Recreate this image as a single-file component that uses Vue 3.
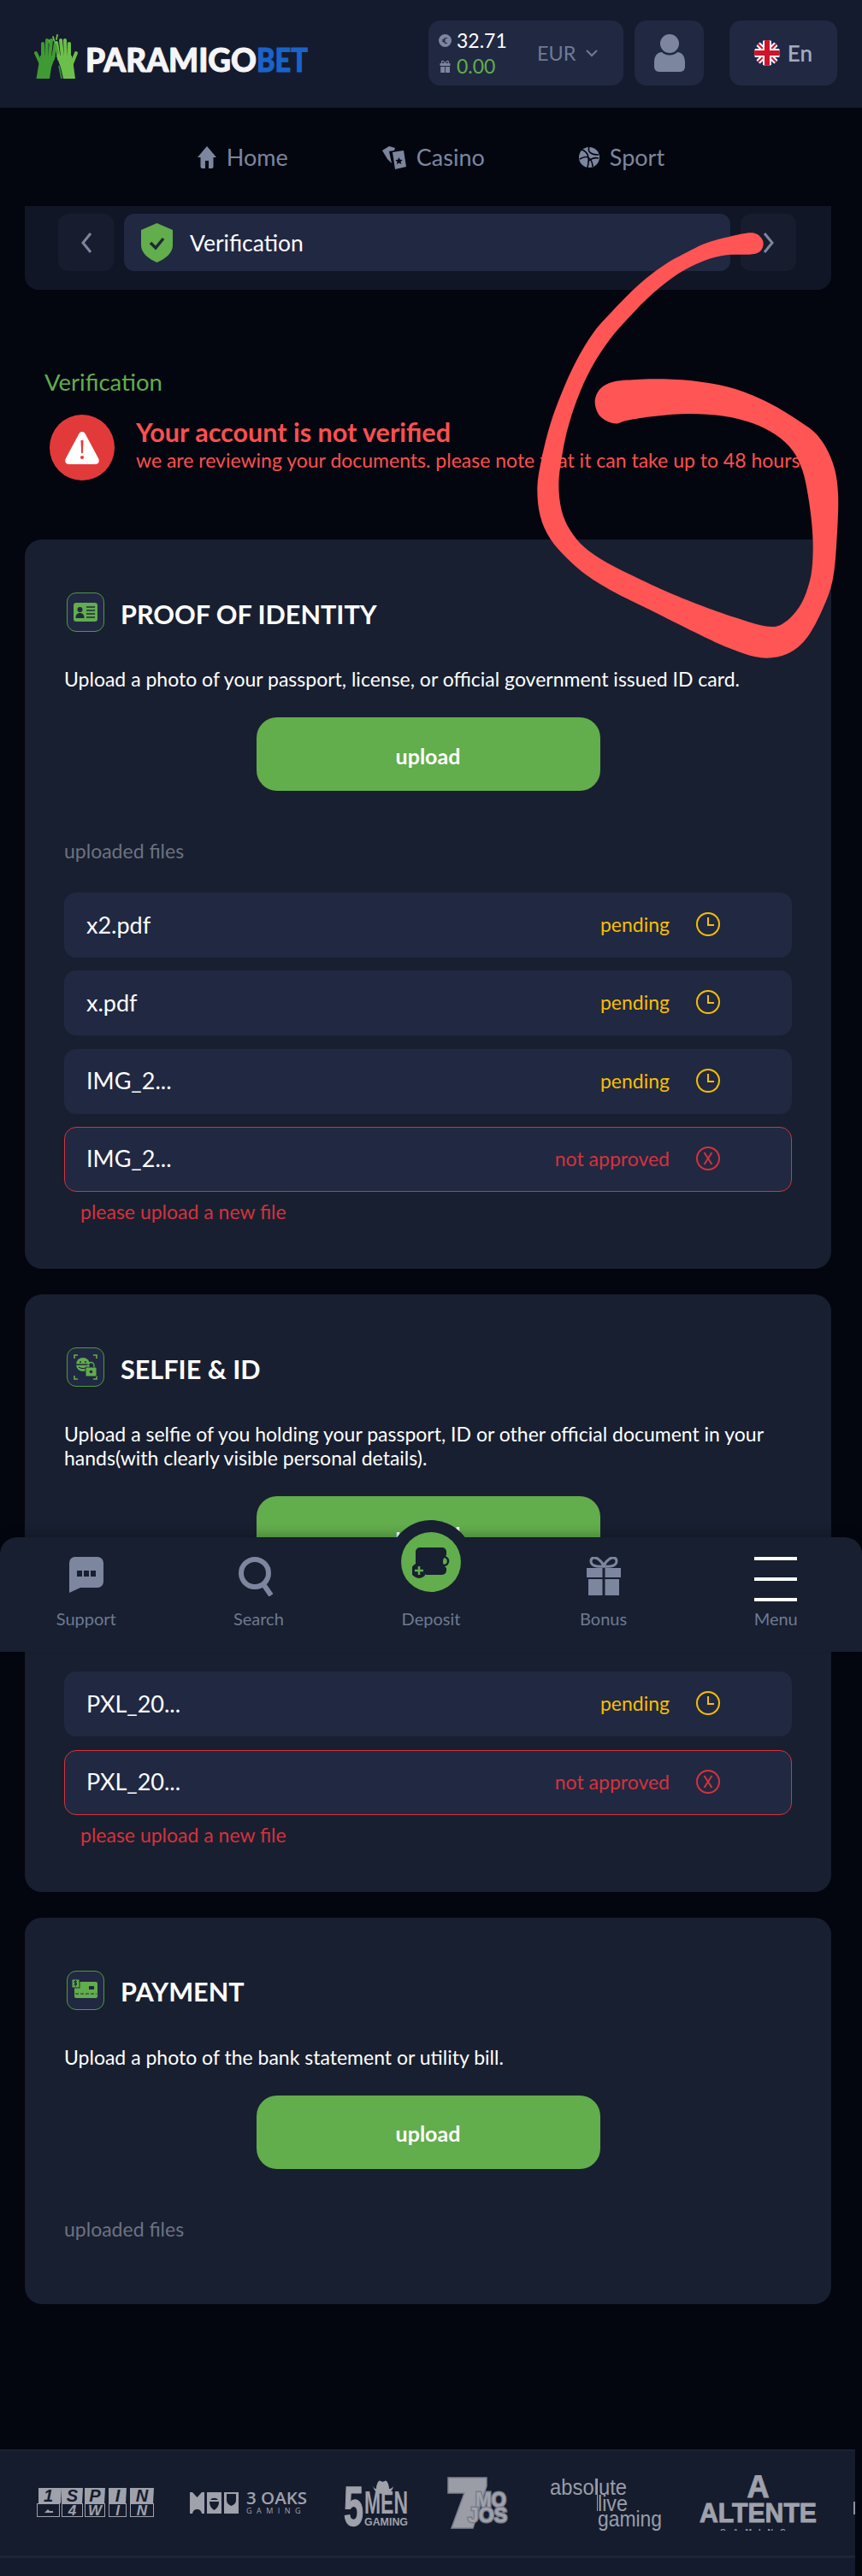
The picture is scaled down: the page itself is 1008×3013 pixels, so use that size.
<script setup>
const outline = [[780,37],[700,50],[620,72],[560,100],[470,150],[380,220],[290,310],[220,390],[160,490],[110,600],[70,710],[40,830],[25,930],[35,1030],[70,1110],[130,1180],[200,1240],[290,1295],[420,1360],[560,1430],[700,1495],[810,1528],[900,1515],[965,1465],[1020,1370],[1060,1260],[1075,1120],[1080,950],[1060,840],[1010,750],[940,695],[840,635],[720,585],[600,560],[470,550],[370,552],[290,560],[245,585],[227,630],[245,680],[295,706],[340,695],[440,680],[560,672],[680,680],[780,705],[860,745],[920,800],[955,870],[975,960],[988,1060],[992,1150],[985,1240],[960,1320],[925,1375],[880,1412],[835,1418],[760,1400],[640,1360],[500,1305],[380,1250],[270,1195],[190,1140],[140,1080],[110,1010],[100,920],[110,830],[130,730],[165,620],[215,510],[280,410],[350,330],[430,250],[520,180],[610,135],[690,115],[780,112],[812,95],[815,62]]

function smoothClosed(p) {
  const n = p.length
  let d = `M${p[0][0]} ${p[0][1]}`
  for (let i = 0; i < n; i++) {
    const a = p[(i - 1 + n) % n], b = p[i], c = p[(i + 1) % n], e = p[(i + 2) % n]
    const c1x = b[0] + (c[0] - a[0]) / 6, c1y = b[1] + (c[1] - a[1]) / 6
    const c2x = c[0] - (e[0] - b[0]) / 6, c2y = c[1] - (e[1] - b[1]) / 6
    d += `C${c1x.toFixed(1)} ${c1y.toFixed(1)} ${c2x.toFixed(1)} ${c2y.toFixed(1)} ${c[0]} ${c[1]}`
  }
  return d + 'Z'
}
const scribble = smoothClosed(outline)

const cards = [
  {
    key: 'id', title: 'PROOF OF IDENTITY',
    desc: 'Upload a photo of your passport, license, or official government issued ID card.',
    files: [
      { name: 'x2.pdf', ok: true }, { name: 'x.pdf', ok: true },
      { name: 'IMG_2...', ok: true }, { name: 'IMG_2...', ok: false }
    ]
  },
  {
    key: 'selfie', title: 'SELFIE & ID',
    desc: 'Upload a selfie of you holding your passport, ID or other official document in your hands(with clearly visible personal details).',
    files: [{ name: 'PXL_20...', ok: true }, { name: 'PXL_20...', ok: false }]
  },
  {
    key: 'pay', title: 'PAYMENT',
    desc: 'Upload a photo of the bank statement or utility bill.',
    files: []
  }
]
const spinTop = [['1', 1, 27], ['S', 30, 25], ['P', 57, 24], ['I', 85, 21], ['N', 110, 28]]
const spinBottom = [['', 1, 27], ['4', 30, 25], ['W', 57, 24], ['I', 85, 21], ['N', 110, 28]]
</script>

<template>
  <div class="page">
    <header class="top">
      <svg class="logo" width="330" height="60" viewBox="0 0 330 60">
        <g transform="translate(-40,-42)">
          <g fill="none" stroke="#6cc04a" stroke-width="1.8" stroke-linecap="round">
            <path d="M57 50l2 5M62 46l1.500 5M67 44l-1 5" />
          </g>
          <g transform="translate(131,0) scale(-1,1)">
            <path d="M66 68L84 68L86 80L88.500 95L73 95L71 82Z" fill="#3f9a34" />
            <g stroke="#3f9a34" stroke-width="4" stroke-linecap="round">
              <path d="M69 72L66 53M73 70L71 50M77 70L76 50M81 71L81 54M82 80L89 65" />
            </g>
          </g>
          <path d="M66 68L84 68L86 80L88 95L74 95L71 82Z" fill="#6cc04a" />
          <g stroke="#6cc04a" stroke-width="4" stroke-linecap="round">
            <path d="M69 72L66 53M73 70L71 50M77 70L76 50M81 71L81 54M83 80L89 65" />
          </g>
          <path d="M72 95L69 80M68 66L65 54" stroke="#3f9a34" stroke-width="1.500" fill="none" />
          <text class="logo-text" x="100" y="87" fill="#f5f5f7" stroke="#f5f5f7" textLength="200" lengthAdjust="spacingAndGlyphs">PARAMIGO</text>
          <text class="logo-text" x="300" y="87" fill="#1a63c8" stroke="#1a63c8" textLength="60" lengthAdjust="spacingAndGlyphs">BET</text>
        </g>
      </svg>

      <div class="balance tile">
        <div class="amounts">
          <div class="amount">
            <svg width="15" height="15" viewBox="0 0 15 15"><circle cx="7.500" cy="7.500" r="7.500" fill="#7c869f" /><path d="M10 4.800a3 3 0 0 0-4.300 2.700 3 3 0 0 0 4.300 2.700M4 6.800h4M4 8.200h4" fill="none" stroke="#212842" stroke-width="1.100" /></svg>
            <span class="money">32.71</span>
          </div>
          <div class="amount">
            <svg width="15" height="15" viewBox="0 0 15 15" fill="#7c869f"><path d="M1.500 4h12v3h-12zM2.200 8h5v7h-5zM8 8h5v7H8z" /><path d="M7.500 4C5 0 2.500 1 4 4M7.500 4C10 0 12.500 1 11 4" fill="none" stroke="#7c869f" stroke-width="1.200" /></svg>
            <span class="money bonus">0.00</span>
          </div>
        </div>
        <div class="currency">
          <span>EUR</span>
          <svg width="14" height="9" viewBox="0 0 14 9"><path d="M1 1l6 6 6-6" fill="none" stroke="#6e7b96" stroke-width="2" /></svg>
        </div>
      </div>

      <div class="profile tile">
        <svg width="36" height="44" viewBox="0 0 36 44" fill="#7c869f"><circle cx="18" cy="11" r="11" /><path d="M0 33c0-8 4-12 9-12 2 2 5 3.500 9 3.500s7-1.500 9-3.500c5 0 9 4 9 12v5c0 3-2 6-6 6H6c-4 0-6-3-6-6z" /></svg>
      </div>

      <div class="lang tile">
        <svg width="30" height="30" viewBox="0 0 30 30">
          <defs><clipPath id="flag-clip"><circle cx="15" cy="15" r="15" /></clipPath></defs>
          <g clip-path="url(#flag-clip)">
            <rect width="30" height="30" fill="#1c2a6b" />
            <path d="M0 0L30 30M30 0L0 30" stroke="#fff" stroke-width="6" />
            <path d="M0 0L30 30M30 0L0 30" stroke="#cf142b" stroke-width="2" />
            <path d="M15 0V30M0 15H30" stroke="#fff" stroke-width="10" />
            <path d="M15 0V30M0 15H30" stroke="#cf142b" stroke-width="6" />
          </g>
        </svg>
        <span>En</span>
      </div>
    </header>

    <nav class="mainnav">
      <a class="navitem">
        <svg width="22" height="26" viewBox="0 0 22 26" fill="#7c869f"><path d="M11 0L22 13H18.500V24a2 2 0 0 1-2 2H13V17H9V26H5.500a2 2 0 0 1-2-2V13H0Z" /></svg>
        <span>Home</span>
      </a>
      <a class="navitem">
        <svg width="28" height="28" viewBox="0 0 28 28" fill="#7c869f"><path d="M8 1l7 2-1 3-6 1 3 14-5-5L0 6z" /><path d="M12 8l13-2 3 19-13 3z" /><path d="M19.500 14l1.300 2.800 3 .2-2.300 2 .8 3-2.800-1.600-2.500 1.800.6-3-2.300-2 3-.4z" fill="#03060f" /></svg>
        <span>Casino</span>
      </a>
      <a class="navitem">
        <svg width="24" height="26" viewBox="0 0 24 26"><circle cx="12" cy="13" r="12" fill="#7c869f" /><path d="M12 1c-2 5 1 9 11 9M3 4c7 2 10 9 7 21M1 15c5-3 9-3 11-1 3 3 4 6 4 10M23 14c-4-1-8 0-11 3" fill="none" stroke="#03060f" stroke-width="1.600" /></svg>
        <span>Sport</span>
      </a>
    </nav>

    <main class="content">
      <div class="subnav">
        <button class="arrow">
          <svg width="14" height="26" viewBox="0 0 14 26"><path d="M12 2L3 13l9 11" fill="none" stroke="#7c869f" stroke-width="3" /></svg>
        </button>
        <div class="crumb">
          <svg width="37" height="46" viewBox="0 0 37 46">
            <path d="M18.500 0L37 8V26C37 35 28 42 18.500 46 9 42 0 35 0 26V8Z" fill="#62ad4c" />
            <path d="M11 23l6 6 9-11" fill="none" stroke="#1e2a33" stroke-width="3.500" />
          </svg>
          <span>Verification</span>
        </div>
        <button class="arrow">
          <svg width="14" height="26" viewBox="0 0 14 26"><path d="M2 2l9 11L2 24" fill="none" stroke="#7c869f" stroke-width="3" /></svg>
        </button>
      </div>

      <h1 class="pagetitle">Verification</h1>

      <div class="alert">
        <div class="alert-badge">
          <svg width="44" height="44" viewBox="0 0 44 44">
            <path d="M22 3c2 0 3 1 4 3l15 28c2 4 0 7-4 7H7c-4 0-6-3-4-7L18 6c1-2 2-3 4-3z" fill="#fff" />
            <path d="M20.500 13h3l-.6 15h-1.800z" fill="#e23a3a" />
            <circle cx="22" cy="33" r="2" fill="#e23a3a" />
          </svg>
        </div>
        <div class="alert-text">
          <div class="alert-title">Your account is not verified</div>
          <div class="alert-sub">we are reviewing your documents. please note that it can take up to 48 hours</div>
        </div>
      </div>

      <section v-for="card in cards" :key="card.key" class="card" :class="{ empty: !card.files.length }">
        <div class="card-head">
          <div class="card-icon">
            <svg v-if="card.key === 'id'" width="44" height="46" viewBox="0 0 44 46">
              <rect x="8" y="12" width="28" height="22" rx="3" fill="#62ad4c" />
              <circle cx="15.500" cy="20" r="3" fill="#212842" />
              <path d="M10.500 30c0-4 2-6 5-6s5 2 5 6z" fill="#212842" />
              <path d="M23 17h10M23 21h10M23 25h10M23 29h10" stroke="#212842" stroke-width="1.500" />
            </svg>
            <svg v-else-if="card.key === 'selfie'" width="44" height="46" viewBox="0 0 44 46">
              <path d="M9 13V9h4M35 13V9h-4M9 33v4h4M35 33v4h-4" fill="none" stroke="#62ad4c" stroke-width="1.600" />
              <circle cx="19" cy="20" r="8" fill="#62ad4c" />
              <path d="M11 20h16" stroke="#212842" stroke-width="1.500" />
              <path d="M15 17h2M21 17h2M14 23c3 2 7 2 10 0" stroke="#212842" stroke-width="1.300" fill="none" />
              <rect x="22" y="23" width="13" height="11" rx="1" fill="#62ad4c" stroke="#212842" stroke-width="1" />
              <path d="M25 23v-2a3 3 0 0 1 7 0v2" fill="none" stroke="#62ad4c" stroke-width="1.300" />
              <circle cx="28.500" cy="28.500" r="1.800" fill="#212842" />
            </svg>
            <svg v-else width="44" height="46" viewBox="0 0 44 46">
              <rect x="9" y="14" width="27" height="19" rx="2" fill="#62ad4c" />
              <rect x="26" y="19" width="6" height="4" fill="#212842" />
              <path d="M10 28h25" stroke="#212842" stroke-width="1" stroke-dasharray="4 2" />
              <rect x="6" y="11" width="9" height="10" fill="#62ad4c" stroke="#212842" stroke-width="1" />
              <path d="M12 13.500h-3v2h2.500v2H8.500M10.300 12v7.500" stroke="#212842" stroke-width="1" fill="none" />
            </svg>
          </div>
          <h2>{{ card.title }}</h2>
        </div>
        <p class="card-desc">{{ card.desc }}</p>
        <button class="upload">upload</button>
        <div class="files-label">uploaded files</div>
        <div v-if="card.files.length" class="files">
          <template v-for="(file, i) in card.files" :key="i">
            <div class="file" :class="{ bad: !file.ok }">
              <span class="file-name">{{ file.name }}</span>
              <span class="file-status">{{ file.ok ? 'pending' : 'not approved' }}</span>
              <svg width="28" height="28" viewBox="0 0 28 28" fill="none" stroke="currentColor" stroke-width="2">
                <circle cx="14" cy="14" r="13" />
                <path v-if="file.ok" d="M14 6v9h7" />
                <path v-else d="M9.500 7l9 14M18.500 7l-9 14" />
              </svg>
            </div>
            <div v-if="!file.ok" class="file-error">please upload a new file</div>
          </template>
        </div>
      </section>
    </main>

    <footer class="foot">
      <div class="providers">
        <svg class="prov" width="138" height="65" viewBox="0 0 138 65">
          <g v-for="b in spinTop" :key="'t' + b[1]">
            <path :d="`M${b[0] === '1' ? b[1] + 2 : b[1]} 15h${b[2]}l-1 18h-${b[2] - 1}z`" fill="#9fa1ab" />
            <text :x="b[1] + b[2] / 2" y="31" text-anchor="middle" class="spin" fill="#151c2e">{{ b[0] }}</text>
          </g>
          <g v-for="b in spinBottom" :key="'b' + b[1]">
            <rect :x="b[1] + 0.500" y="33.500" :width="b[2] - 1" height="15" fill="none" stroke="#9fa1ab" />
            <text v-if="b[0]" :x="b[1] + b[2] / 2" y="47" text-anchor="middle" class="spin-low" fill="#9fa1ab">{{ b[0] }}</text>
          </g>
          <path d="M10 44l4-4 2 2h4v2z" fill="#9fa1ab" />
        </svg>
        <svg class="prov" width="138" height="65" viewBox="0 0 138 65">
          <g fill="#9fa1ab">
            <rect x="0" y="20" width="17" height="25" /><rect x="20" y="20" width="17" height="25" /><rect x="40" y="20" width="17" height="25" />
          </g>
          <g fill="#151c2e">
            <path d="M3 20l5.500 6 5.500-6zM3 45c1-4 3-5 5.500-5s4.500 1 5.500 5z" />
            <path d="M23 31h11c0 6-3 8-5.500 10-2.500-2-5.500-4-5.500-10zM24 29c2-3 7-3 9 0z" />
            <path d="M43 22h11v7c0 4-3 6-5.500 7-2.500-1-5.500-3-5.500-7z" />
          </g>
          <text x="66" y="34" class="oaks" fill="#9fa1ab">3 OAKS</text>
          <text x="66" y="45" class="oaks-sub" fill="#9fa1ab">GAMING</text>
        </svg>
        <svg class="prov" width="79" height="65" viewBox="0 0 79 65">
          <g fill="#9fa1ab">
            <text transform="translate(0,59) scale(1,1.55)" class="five" stroke="#9fa1ab" textLength="23" lengthAdjust="spacingAndGlyphs">5</text>
            <text transform="translate(24,45) scale(1,1.650)" class="men" textLength="51" lengthAdjust="spacingAndGlyphs">MEN</text>
            <text transform="translate(24,59) scale(1,1.300)" class="gam" textLength="51" lengthAdjust="spacingAndGlyphs">GAMING</text>
            <path d="M38 16c0-5 3-11 5-9 2 1 3 1 5 0 2-2 5 4 5 9 3 0 4-2 5-3-1 6-5 9-12 9s-10-3-12-9c1 1 2 3 4 3z" />
          </g>
        </svg>
        <svg class="prov" width="78" height="65" viewBox="0 0 78 65">
          <path d="M1 3H46V13L30 62H5L20 21H1Z" fill="#9a9ca6" stroke="#7f8190" stroke-width="1.500" />
          <text x="33" y="37" class="mojo" fill="#a0a2ac" stroke="#7a7c88" stroke-width="3" paint-order="stroke" textLength="36" lengthAdjust="spacingAndGlyphs">MO</text>
          <text x="24" y="55" class="mojo" fill="#a0a2ac" stroke="#7a7c88" stroke-width="3" paint-order="stroke" textLength="46" lengthAdjust="spacingAndGlyphs">JOS</text>
        </svg>
        <svg class="prov" width="132" height="65" viewBox="0 0 132 65">
          <g class="abs" fill="#9a9ca6">
            <text x="0" y="23" textLength="90" lengthAdjust="spacingAndGlyphs">absolute</text>
            <text x="56" y="42" textLength="35" lengthAdjust="spacingAndGlyphs">live</text>
            <text x="56" y="60" textLength="75" lengthAdjust="spacingAndGlyphs">gaming</text>
          </g>
          <path d="M55.500 4V42" stroke="#9a9ca6" stroke-width="1" />
        </svg>
        <svg class="prov" width="139" height="65" viewBox="0 0 139 65">
          <g fill="#9fa1ab" stroke="#9fa1ab">
            <text x="69.500" y="26" text-anchor="middle" class="alt-a">A</text>
            <text x="1" y="55" class="alt" textLength="137" lengthAdjust="spacingAndGlyphs">ALTENTE</text>
          </g>
          <text x="25" y="69" class="alt-sub" fill="#9fa1ab">GAMING</text>
        </svg>
        <span class="cut"></span>
      </div>
    </footer>

    <div class="tabbar">
      <div class="tab">
        <svg width="42" height="42" viewBox="0 0 42 42" fill="#7c869f"><path d="M7 0H34a7 7 0 0 1 7 7V29a7 7 0 0 1-7 7H14L1 42V7A7 7 0 0 1 7 0Z" /><path d="M10 16h6v7h-6zM18 16h6v7h-6zM26 16h6v7h-6z" fill="#171f30" /></svg>
        <span>Support</span>
      </div>
      <div class="tab">
        <svg width="46" height="46" viewBox="0 0 46 46" fill="none" stroke="#7c869f"><circle cx="19" cy="19" r="16" stroke-width="6" /><path d="M29 32l9 13" stroke-width="6" /></svg>
        <span>Search</span>
      </div>
      <div class="tab deposit">
        <div class="dep-ring">
          <div class="dep-circle">
            <svg width="44" height="44" viewBox="0 0 44 44">
              <path d="M9 5H35a5 5 0 0 1 5 5V14A9 9 0 0 0 40 29V32a5 5 0 0 1-5 5H16A11 11 0 0 0 4 26V10A5 5 0 0 1 9 5Z" fill="#171f30" />
              <circle cx="37" cy="21" r="5" fill="none" stroke="#171f30" stroke-width="2.500" />
              <circle cx="8" cy="32" r="9" fill="#171f30" />
              <path d="M8 27v10M3 32h10" stroke="#62ad4c" stroke-width="2.500" />
            </svg>
          </div>
        </div>
        <span>Deposit</span>
      </div>
      <div class="tab">
        <svg width="42" height="45" viewBox="0 0 42 45" fill="#7c869f">
          <path d="M21 11C12 12 6 10 6 5s6-5 9-2c3 2 5 5 6 8zM21 11c9 1 15-1 15-6s-6-5-9-2c-3 2-5 5-6 8z" fill="none" stroke="#7c869f" stroke-width="3" />
          <path d="M1 13H19.500V24H1zM22.500 13H41V24H22.500zM3 26H19.500V45H3zM22.500 26H39V45H22.500z" />
        </svg>
        <span>Bonus</span>
      </div>
      <div class="tab">
        <div class="burger"><i></i><i></i><i></i></div>
        <span>Menu</span>
      </div>
    </div>

    <svg class="scribble" width="388" height="520" viewBox="0 0 1164 1560">
      <path :d="scribble" fill="#ff5555" />
    </svg>
  </div>
</template>

<style>
html, body { margin: 0; background: #03060f; }
</style>

<style scoped>
* { box-sizing: border-box; }
.page { position: relative; width: 1008px; height: 3013px; overflow: hidden; background: #03060f; font-family: Lato, "Noto Sans", sans-serif; color: #fff; }
.top { height: 126px; background: #151b2e; display: flex; align-items: center; padding: 0 29px 2px 40px; }
.logo { flex: none; margin-top: 14px; margin-right: auto; }
.logo-text { font-family: Lato, sans-serif; font-weight: 900; font-size: 37px; stroke-width: 1px; stroke-linejoin: round; }
.tile { height: 76px; background: #212842; border-radius: 14px; display: flex; align-items: center; justify-content: center; }
.balance { width: 228px; justify-content: flex-start; padding: 0 0 0 12px; }
.amounts { display: flex; flex-direction: column; gap: 5px; width: 115px; }
.amount { display: flex; align-items: center; gap: 6px; height: 25px; }
.money { font-size: 23px; color: #fff; line-height: 25px; }
.bonus { color: #62ad4c; }
.currency { display: flex; align-items: center; gap: 11px; font-size: 23.500px; color: #6e7b96; }
.profile { width: 81px; margin-left: 13px; }
.lang { width: 126px; margin-left: 30px; gap: 9px; font-size: 26px; font-weight: 600; color: #a2abbe; }
.mainnav { height: 115px; display: flex; align-items: center; justify-content: center; gap: 110px; }
.navitem { display: flex; align-items: center; gap: 12px; font-size: 27px; color: #7c869f; }
.content { width: 943px; margin-left: 29px; }
.subnav { height: 98px; background: #111627; border-radius: 0 0 16px 16px; display: flex; gap: 12px; padding: 9px 41px 0 39px; }
.arrow { width: 65px; height: 67px; background: #171d2e; border: 0; border-radius: 12px; padding: 0; display: flex; align-items: center; justify-content: center; }
.crumb { flex: 1; height: 67px; background: #212842; border-radius: 12px; display: flex; align-items: center; gap: 20px; padding-left: 20px; font-size: 26.500px; color: #fff; }
.pagetitle { margin: 91px 0 21px 23px; font-size: 27.500px; line-height: 34px; font-weight: 400; color: #62ad4c; }
.alert { display: flex; align-items: center; gap: 25px; margin-left: 29px; height: 77px; }
.alert-badge { width: 76px; height: 77px; flex: none; border-radius: 50%; background: #e23a3a; display: flex; align-items: center; justify-content: center; }
.alert-text { white-space: nowrap; padding-bottom: 7px; }
.alert-title { font-size: 30.500px; line-height: 36px; font-weight: 700; color: #ff4f4f; }
.alert-sub { font-size: 23px; line-height: 30px; color: #ff4f4f; }
.card { margin-top: 30px; background: #181f30; border-radius: 20px; padding: 62px 46px 51px; }
.alert + .card { margin-top: 69px; }
.card.empty { padding-bottom: 74px; }
.card-head { display: flex; align-items: center; gap: 19px; margin-left: 3px; height: 46px; }
.card-icon { width: 44px; height: 46px; flex: none; background: #212842; border: 1.500px solid #4f9a3e; border-radius: 11px; overflow: hidden; }
.card-icon svg { display: block; margin: -1.500px; }
.card-head h2 { margin: 0; padding-top: 4px; font-size: 30.600px; font-weight: 700; color: #fff; }
.card-desc { margin: 41px 0 0; font-size: 23px; line-height: 28px; color: #fff; }
.upload { display: block; width: 402px; height: 86px; margin: 31px auto 0; padding: 3px 0 0; background: #62ad4c; border: 0; border-radius: 24px; font-family: inherit; font-size: 25px; font-weight: 700; color: #fff; }
.files-label { margin-top: 56px; font-size: 23px; line-height: 28px; color: #6c7280; }
.files { margin-top: 35px; display: flex; flex-direction: column; gap: 15.330px; }
.file { height: 76px; background: #212842; border: 1px solid transparent; border-radius: 14px; display: flex; align-items: center; padding: 0 83px 2px 25px; color: #f6bf00; }
.file.bad { border-color: #d5323c; color: #d5323c; }
.file-name { flex: 1; font-size: 27px; color: #fff; }
.file-status { font-size: 23px; margin-right: 31px; }
.file svg { flex: none; }
.file-error { margin: -6px 0 2px 19px; font-size: 23px; line-height: 28px; color: #d5323c; }
.foot { position: absolute; left: 0; top: 2865px; width: 1000px; height: 148px; background: #151b2e; border-top: 1px solid #1f2740; }
.providers { height: 126px; border-bottom: 3px solid #1e2539; display: flex; align-items: center; gap: 42px; padding-left: 42px; overflow: hidden; background: #151c2e; }
.prov { flex: none; display: block; }
.spin { font-family: "Liberation Sans", sans-serif; font-weight: 700; font-style: italic; font-size: 20px; }
.spin-low { font-family: "Liberation Sans", sans-serif; font-weight: 700; font-style: italic; font-size: 17px; }
.oaks { font-family: "Open Sans", sans-serif; font-size: 20.500px; font-weight: 600; }
.oaks-sub { font-family: "Open Sans", sans-serif; font-size: 9px; letter-spacing: 5.500px; }
.five { font-family: "Liberation Sans", sans-serif; font-weight: 700; font-size: 42px; stroke-width: 1px; }
.men { font-family: "Liberation Sans", sans-serif; font-weight: 700; font-size: 22px; }
.gam { font-family: "Liberation Sans", sans-serif; font-weight: 700; font-size: 10px; }
.mojo { font-family: "Liberation Sans", sans-serif; font-weight: 700; font-size: 24px; }
.abs { font-family: "Liberation Sans", sans-serif; font-size: 25px; }
.alt-a { font-family: "Liberation Sans", sans-serif; font-weight: 700; font-size: 36px; }
.alt { font-family: "Liberation Sans", sans-serif; font-weight: 700; font-size: 32px; stroke-width: 1px; }
.alt-sub { font-family: "Liberation Sans", sans-serif; font-weight: 700; font-size: 9px; letter-spacing: 8px; }
.cut { flex: none; width: 3px; height: 15px; margin-top: 12px; background: #8f919c; }
.tabbar { position: absolute; left: 0; top: 1798px; width: 1008px; height: 134px; background: #171f30; border-radius: 20px 20px 0 0; box-shadow: 0 -6px 10px rgba(0, 0, 0, 0.18); display: grid; grid-template-columns: repeat(5, 1fr); }
.tab { position: relative; height: 134px; display: flex; flex-direction: column; align-items: center; justify-content: flex-end; padding-bottom: 27px; font-size: 20px; line-height: 24px; color: #6e7a92; }
.tab > svg, .burger { position: absolute; top: 23px; }
.burger { width: 50px; height: 52px; display: flex; flex-direction: column; justify-content: space-between; }
.burger i { display: block; height: 4px; background: #fff; }
.dep-ring { position: absolute; left: 50%; top: -20px; width: 98px; height: 98px; margin-left: -49px; border-radius: 50%; background: #171f30; display: flex; align-items: center; justify-content: center; }
.dep-circle { width: 70px; height: 70px; border-radius: 50%; background: #62ad4c; display: flex; align-items: center; justify-content: center; }
.scribble { position: absolute; left: 620px; top: 260px; pointer-events: none; }
</style>
